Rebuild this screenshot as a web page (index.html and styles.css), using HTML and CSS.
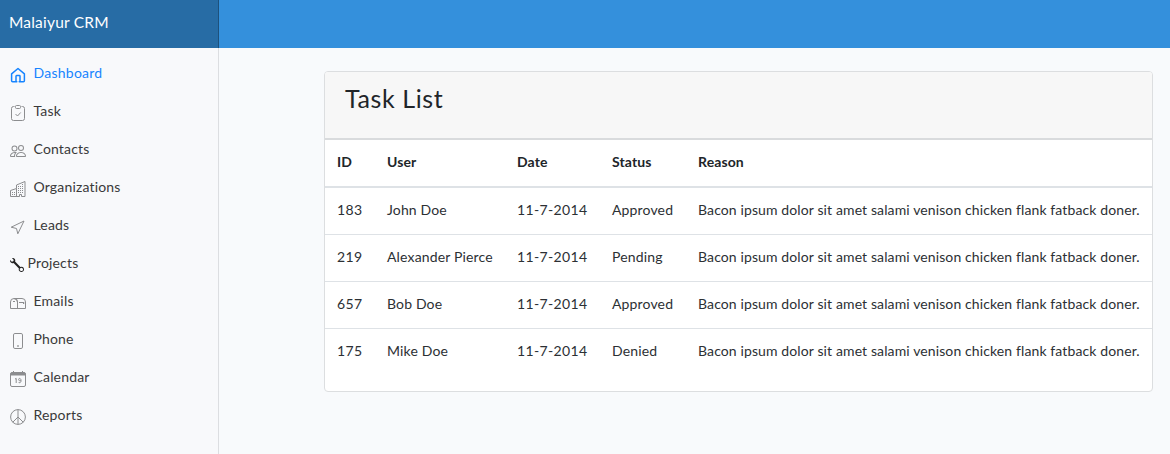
FILE: index.html
```html
<!DOCTYPE html>
<html lang="en">
<head>
<meta charset="utf-8">
<title>Malaiyur CRM</title>
<link rel="stylesheet" href="styles.css">
</head>
<body>
<header class="topbar"><a class="brand">Malaiyur CRM</a></header>
<div class="layout">
<nav class="sidebar">
<a class="nav-link active"><svg class="icon" viewBox="0 0 16 16"><path d="M6 14.7H2.6a1 1 0 0 1-1-1V6.8L8 1.5l6.4 5.3v6.9a1 1 0 0 1-1 1H10M6 14.7V9.2a.6.6 0 0 1 .6-.6h2.8a.6.6 0 0 1 .6.6v5.5M6 14.7h.8M10 14.7h-.8" fill="none" stroke="currentColor" stroke-width="1.5" stroke-linejoin="round" stroke-linecap="round"/></svg><span>Dashboard</span></a>
<a class="nav-link"><svg class="icon line" viewBox="0 0 16 16"><path d="M4.5 1.5h-1a2 2 0 0 0-2 2v10a2 2 0 0 0 2 2h9a2 2 0 0 0 2-2v-10a2 2 0 0 0-2-2h-1M6.5.5h3a1 1 0 0 1 1 1v1a1 1 0 0 1-1 1h-3a1 1 0 0 1-1-1v-1a1 1 0 0 1 1-1zM5.5 9l2 2 3.2-3.5"/></svg><span>Task</span></a>
<a class="nav-link"><svg class="icon" viewBox="0 0 16 16"><path d="M15 14s1 0 1-1-1-4-5-4-5 3-5 4 1 1 1 1h8zm-7.978-1A.261.261 0 0 1 7 12.996c.001-.264.167-1.03.76-1.72C8.312 10.629 9.282 10 11 10c1.717 0 2.687.63 3.24 1.276.593.69.758 1.457.76 1.72l-.008.002a.274.274 0 0 1-.014.002H7.022zM11 7a2 2 0 1 0 0-4 2 2 0 0 0 0 4zm3-2a3 3 0 1 1-6 0 3 3 0 0 1 6 0zM6.936 9.28a5.88 5.88 0 0 0-1.23-.247A7.35 7.35 0 0 0 5 9c-4 0-5 3-5 4 0 .667.333 1 1 1h4.216A2.238 2.238 0 0 1 5 13c0-1.01.377-2.042 1.09-2.904.243-.294.526-.569.846-.816zM4.92 10A5.493 5.493 0 0 0 4 13H1c0-.26.164-1.03.76-1.724.545-.636 1.492-1.256 3.16-1.275zM1.5 5.5a3 3 0 1 1 6 0 3 3 0 0 1-6 0zm3-2a2 2 0 1 0 0 4 2 2 0 0 0 0-4z" fill="currentColor" fill-rule="evenodd"/></svg><span>Contacts</span></a>
<a class="nav-link"><svg class="icon" viewBox="0 0 16 16"><path d="M.5 15.5v-6l6-2V4l8.500-3.500v15h-3.500v-2h-2v2zM6.500 7.500v8" fill="none" stroke="currentColor" stroke-linejoin="round"/><path d="M2 11h1v1H2zm2 0h1v1H4zm-2 2h1v1H2zm2 0h1v1H4zm4-4h1v1H8zm2 0h1v1h-1zm-2 2h1v1H8zm2 0h1v1h-1zm2-2h1v1h-1zm0 2h1v1h-1zM8 7h1v1H8zm2 0h1v1h-1zm2 0h1v1h-1zM8 5h1v1H8zm2 0h1v1h-1zm2 0h1v1h-1zm0-2h1v1h-1z" fill="currentColor"/></svg><span>Organizations</span></a>
<a class="nav-link"><svg class="icon line" viewBox="0 0 16 16"><path d="M14 2 1.2 8.2l5.3 1.3 1.3 5.3z"/></svg><span>Leads</span></a>
<a class="nav-link dark"><svg class="wrench" viewBox="0 0 16 16"><path d="M.1 2.2a3 3 0 0 0 4 3.6l6.1 6.1a3 3 0 1 0 1.7-1.7L5.8 4.1A3 3 0 0 0 2.2.1l2.1 2.1L3.7 3.8l-1.6.5zM13 11l1.6 1L15 13.500l-1 1.300-1.700.100-1.200-1.200.200-1.700z" fill="currentColor" fill-rule="evenodd"/></svg><span>Projects</span></a>
<a class="nav-link"><svg class="icon line" viewBox="0 0 16 16"><path d="M4 3.500h8A3.500 3.500 0 0 1 15.500 7v6.500H.5V7a3.500 3.500 0 0 1 7 0v6.500M4 3.500A3.500 3.500 0 0 1 7.500 7M3 6.500h2M9 7.500h5v1h-1"/></svg><span>Emails</span></a>
<a class="nav-link"><svg class="icon line" viewBox="0 0 16 16"><rect x="3.5" y=".5" width="9" height="15" rx="1.4"/><path d="M7.200 13h1.600" stroke-width="1.4"/></svg><span>Phone</span></a>
<a class="nav-link"><svg class="icon line" viewBox="0 0 16 16"><rect x=".5" y="1.5" width="15" height="14" rx="1.5"/><path d="M1 2h14v2H1z" fill="currentColor"/><path d="M3.500 0v2M12.500 0v2M5 8.100l1.200-.7V12M10.900 9.600c-2 1.300-3.100-2-1.400-2.200 2.100 0 2 4.400.200 4.300-.7 0-1-.3-1.200-.7"/></svg><span>Calendar</span></a>
<a class="nav-link"><svg class="icon line" viewBox="0 0 16 16"><circle cx="8" cy="8" r="7.4"/><path d="M8 .5v15M8 8l-5.300 5.300M8 8l5.300 5.300"/></svg><span>Reports</span></a>
</nav>
<main class="main">
<section class="card">
<div class="card-header"><h1 class="card-title">Task List</h1></div>
<table class="table">
<colgroup><col class="c-id"><col class="c-user"><col class="c-date"><col class="c-status"><col></colgroup>
<thead><tr><th>ID</th><th>User</th><th>Date</th><th>Status</th><th>Reason</th></tr></thead>
<tbody>
<tr><td class="num">183</td><td>John Doe</td><td class="num">11-7-2014</td><td>Approved</td><td class="reason">Bacon ipsum dolor sit amet salami venison chicken flank fatback doner.</td></tr>
<tr><td class="num">219</td><td>Alexander Pierce</td><td class="num">11-7-2014</td><td>Pending</td><td class="reason">Bacon ipsum dolor sit amet salami venison chicken flank fatback doner.</td></tr>
<tr><td class="num">657</td><td>Bob Doe</td><td class="num">11-7-2014</td><td>Approved</td><td class="reason">Bacon ipsum dolor sit amet salami venison chicken flank fatback doner.</td></tr>
<tr><td class="num">175</td><td>Mike Doe</td><td class="num">11-7-2014</td><td>Denied</td><td class="reason">Bacon ipsum dolor sit amet salami venison chicken flank fatback doner.</td></tr>
</tbody>
</table>
</section>
</main>
</div>
</body>
</html>
```
FILE: styles.css
```css
* { box-sizing: border-box; }
body { margin: 0; height: 454px; overflow: hidden; display: flex; flex-direction: column; background: #f8fafc; color: #212529; font: 14px/22px Lato, "Open Sans", sans-serif; }
.topbar { height: 48px; flex: none; display: flex; background: #3490dc; }
.brand { width: 219px; padding: 10px 9px; background: #276ca5; border-right: 1px solid #1d517c; color: #fff; font-size: 15.5px; line-height: 24px; letter-spacing: .2px; white-space: nowrap; }
.layout { flex: 1; display: flex; min-height: 0; }
.sidebar { width: 219px; flex: none; padding-top: 6px; background: #f8f9fb; border-right: 1px solid #dcdee1; }
.nav-link { height: 38px; display: flex; align-items: center; padding-left: 10px; gap: 7.5px; color: #3a3a3a; white-space: nowrap; }
.nav-link span { padding-bottom: 1px; letter-spacing: .17px; }
.nav-link.active { color: #1684ff; }
.nav-link.active span { letter-spacing: .25px; }
.nav-link.dark { gap: 3.5px; }
.icon { width: 16px; height: 16px; margin-top: 4px; color: #8c8d8f; flex: none; }
.active .icon { color: #1684ff; }
.line { fill: none; stroke: currentColor; stroke-width: 1; stroke-linejoin: round; }
.wrench { width: 14px; height: 14px; margin-top: 4px; color: #222; }
.main { flex: 1; padding: 23px 17px 0 105px; }
.card { height: 321px; border: 1px solid #dcdee0; border-radius: 4px; background: #fff; overflow: hidden; }
.card-header { height: 66px; padding: 11px 20px; background: #f7f7f7; }
.card-title { margin: 0; font-size: 25px; line-height: 31px; font-weight: 400; letter-spacing: .6px; }
.table { width: 100%; table-layout: fixed; border-spacing: 0; border-collapse: separate; }
.c-id { width: 50px; }
.c-user { width: 130px; }
.c-date { width: 95px; }
.c-status { width: 86px; }
.table th, .table td { padding: 0 12px; text-align: left; vertical-align: middle; white-space: nowrap; letter-spacing: .15px; }
.table th { height: 50px; padding-bottom: 2px; border-top: 2px solid #d9dbdd; border-bottom: 2px solid #dee2e6; font-weight: 700; letter-spacing: .1px; }
.table td { height: 47px; padding-bottom: 2px; border-top: 1px solid #dee2e6; color: #2c3034; }
.table tbody tr:first-child td { height: 46px; border-top: 0; }
.table .num { letter-spacing: .35px; }
.table .reason { letter-spacing: .115px; }
```
